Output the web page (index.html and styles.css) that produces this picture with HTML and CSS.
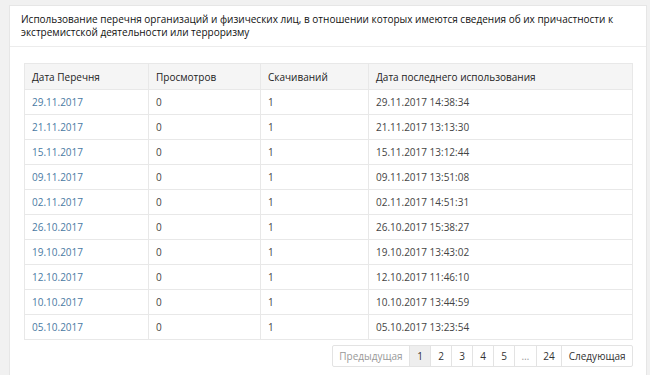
FILE: index.html
```html
<!DOCTYPE html>
<html lang="ru">
<head>
<meta charset="utf-8">
<link rel="stylesheet" href="styles.css">
</head>
<body>
<div class="card">
  <div class="card-head">Использование перечня организаций и физических лиц, в отношении которых имеются сведения об их причастности к экстремистской деятельности или терроризму</div>
  <div class="card-body">
    <table class="grid">
      <thead>
        <tr><th class="c1">Дата Перечня</th><th class="c2">Просмотров</th><th class="c3">Скачиваний</th><th>Дата последнего использования</th></tr>
      </thead>
      <tbody>
        <tr><td><a href="#">29.11.2017</a></td><td>0</td><td>1</td><td>29.11.2017 14:38:34</td></tr>
        <tr><td><a href="#">21.11.2017</a></td><td>0</td><td>1</td><td>21.11.2017 13:13:30</td></tr>
        <tr><td><a href="#">15.11.2017</a></td><td>0</td><td>1</td><td>15.11.2017 13:12:44</td></tr>
        <tr><td><a href="#">09.11.2017</a></td><td>0</td><td>1</td><td>09.11.2017 13:51:08</td></tr>
        <tr><td><a href="#">02.11.2017</a></td><td>0</td><td>1</td><td>02.11.2017 14:51:31</td></tr>
        <tr><td><a href="#">26.10.2017</a></td><td>0</td><td>1</td><td>26.10.2017 15:38:27</td></tr>
        <tr><td><a href="#">19.10.2017</a></td><td>0</td><td>1</td><td>19.10.2017 13:43:02</td></tr>
        <tr><td><a href="#">12.10.2017</a></td><td>0</td><td>1</td><td>12.10.2017 11:46:10</td></tr>
        <tr><td><a href="#">10.10.2017</a></td><td>0</td><td>1</td><td>10.10.2017 13:44:59</td></tr>
        <tr><td><a href="#">05.10.2017</a></td><td>0</td><td>1</td><td>05.10.2017 13:23:54</td></tr>
      </tbody>
    </table>
    <div class="pager-row">
      <ul class="pager">
        <li class="disabled"><span>Предыдущая</span></li>
        <li class="active"><span>1</span></li>
        <li><a href="#">2</a></li>
        <li><a href="#">3</a></li>
        <li><a href="#">4</a></li>
        <li><a href="#">5</a></li>
        <li class="disabled"><span>…</span></li>
        <li><a href="#">24</a></li>
        <li><a href="#">Следующая</a></li>
      </ul>
    </div>
  </div>
</div>
</body>
</html>
```
FILE: styles.css
```css
html, body {
  margin: 0;
  padding: 0;
  background: #f1f1f1;
  font-family: "Open Sans", "Noto Sans", sans-serif;
  font-size: 10px;
  color: #444;
}
.card {
  margin: 5px 3px 0 9px;
  background: #fff;
  border: 1px solid #e6e6e6;
  border-bottom: none;
  min-height: 380px;
}
.card-head {
  padding: 7px 20px 7px 11px;
  line-height: 13px;
  color: #111;
  border-bottom: 1px solid #ececec;
}
.card-body {
  padding: 16px 13px 0 14px;
}
.grid {
  width: 100%;
  border-collapse: collapse;
  border: 1px solid #e8e8e8;
}
.grid th, .grid td {
  text-align: left;
  padding: 0 7px;
  height: 24px;
  border: 1px solid #e8e8e8;
  font-weight: normal;
}
.grid th {
  height: 25px;
  background: #f5f5f5;
  color: #222;
}
.grid .c1 { width: 109px; }
.grid .c2 { width: 97px; }
.grid .c3 { width: 93px; }
.grid a {
  color: #4a7aa3;
  text-decoration: none;
}
.pager-row {
  display: flex;
  justify-content: flex-end;
  padding-top: 5px;
}
.pager {
  display: flex;
  list-style: none;
  margin: 0;
  padding: 0;
  border: 1px solid #e3e3e3;
  border-radius: 2px;
}
.pager li {
  display: flex;
}
.pager li + li {
  border-left: 1px solid #e3e3e3;
}
.pager a, .pager span {
  display: block;
  padding: 0 6.5px;
  line-height: 20px;
  color: #333;
  text-decoration: none;
  min-width: 7px;
  text-align: center;
}
.pager .disabled span {
  color: #999;
}
.pager .active span {
  background: #eee;
  color: #333;
}
```
